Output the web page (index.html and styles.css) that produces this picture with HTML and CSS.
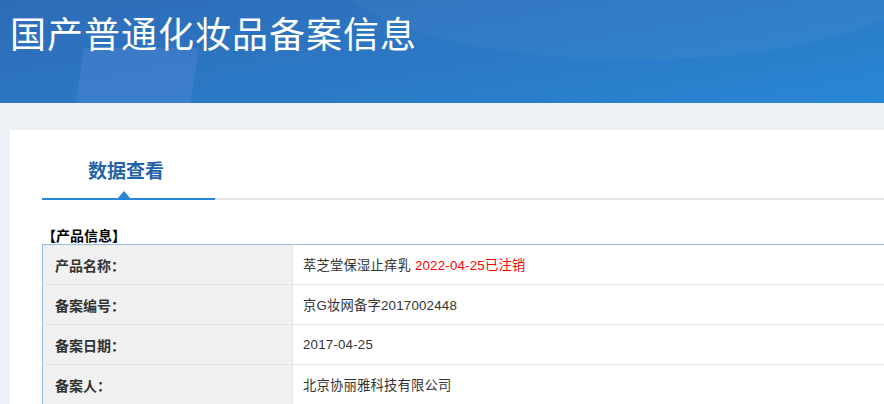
FILE: index.html
```html
<!DOCTYPE html>
<html lang="zh-CN">
<head>
    <meta charset="UTF-8">
    <title>国产普通化妆品备案信息</title>
    <link rel="stylesheet" href="styles.css">
</head>
<body>
    <div class="header">
        <h1>国产普通化妆品备案信息</h1>
    </div>
    <div class="main">
        <div class="card">
            <div class="tabs">
                <div class="tab active">数据查看</div>
                <div class="tab-rest"></div>
            </div>
            <h2 class="section-title">【产品信息】</h2>
            <table class="info">
                <tr>
                    <th>产品名称：</th>
                    <td>萃芝堂保湿止痒乳 <span class="red">2022-04-25已注销</span></td>
                </tr>
                <tr>
                    <th>备案编号：</th>
                    <td>京G妆网备字2017002448</td>
                </tr>
                <tr>
                    <th>备案日期：</th>
                    <td>2017-04-25</td>
                </tr>
                <tr>
                    <th>备案人：</th>
                    <td>北京协丽雅科技有限公司</td>
                </tr>
            </table>
        </div>
    </div>
</body>
</html>
```

FILE: styles.css
```css
body{
    margin: 0;
    background-color: #eef2f6;
    font-family: "Noto Sans CJK SC", "Noto Sans", sans-serif;
    color: #333;
    overflow: hidden;
}

.header{
    position: relative;
    height: 103px;
    background: linear-gradient(170deg, #2e6bb6 0%, #2b79c6 55%, #2887d4 100%);
    overflow: hidden;
}
.header::before{
    position: absolute;
    content: '';
    left: 78px;
    top: 48px;
    width: 115px;
    height: 80px;
    background-color: rgba(120, 150, 230, 0.22);
    transform: skewX(-8deg);
}
.header::after{
    position: absolute;
    content: '';
    right: -60px;
    top: -140px;
    width: 620px;
    height: 200px;
    border-radius: 50%;
    background-color: rgba(255, 255, 255, 0.035);
}
.header h1{
    position: relative;
    z-index: 1;
    margin: 0;
    padding: 8px 0 0 10px;
    font-size: 36px;
    line-height: 48px;
    font-weight: normal;
    letter-spacing: 1px;
    color: #fff;
}

.main{
    padding: 27px 0 0 10px;
}
.card{
    background-color: #fff;
    padding-left: 32px;
    height: 300px;
}

.tabs{
    display: flex;
    align-items: flex-end;
}
.tab{
    position: relative;
    width: 168px;
    padding: 26px 5px 14px 0;
    line-height: 28px;
    text-align: center;
    font-size: 19px;
    font-weight: bold;
    color: #2363a8;
    border-bottom: 2px solid #2786d6;
}
.tab::after{
    position: absolute;
    content: '';
    left: 76px;
    bottom: 0;
    border: 6px solid transparent;
    border-bottom: 7px solid #2786d6;
    border-top: none;
}
.tab-rest{
    flex: 1;
    border-bottom: 2px solid #e6e6e6;
}

.section-title{
    margin: 26px 0 0;
    font-size: 14px;
    line-height: 18px;
    font-weight: bold;
    color: #000;
}

.info{
    width: 1000px;
    border-collapse: collapse;
    border-top: 1px solid #95bbe9;
    border-left: 1px solid #95bbe9;
}
.info th,
.info td{
    height: 39px;
    padding: 0;
    border-bottom: 1px solid #e3e3e3;
    text-align: left;
}
.info th{
    width: 237px;
    padding-left: 12px;
    background-color: #f0f0f0;
    border-right: 1px solid #e3e3e3;
    font-size: 14px;
    font-weight: bold;
    color: #333;
}
.info td{
    padding-left: 10px;
    font-family: "Liberation Sans", "Noto Sans CJK SC", sans-serif;
    font-size: 13.3px;
    letter-spacing: 0.2px;
    color: #333;
}
.red{
    color: #f00;
}
```
